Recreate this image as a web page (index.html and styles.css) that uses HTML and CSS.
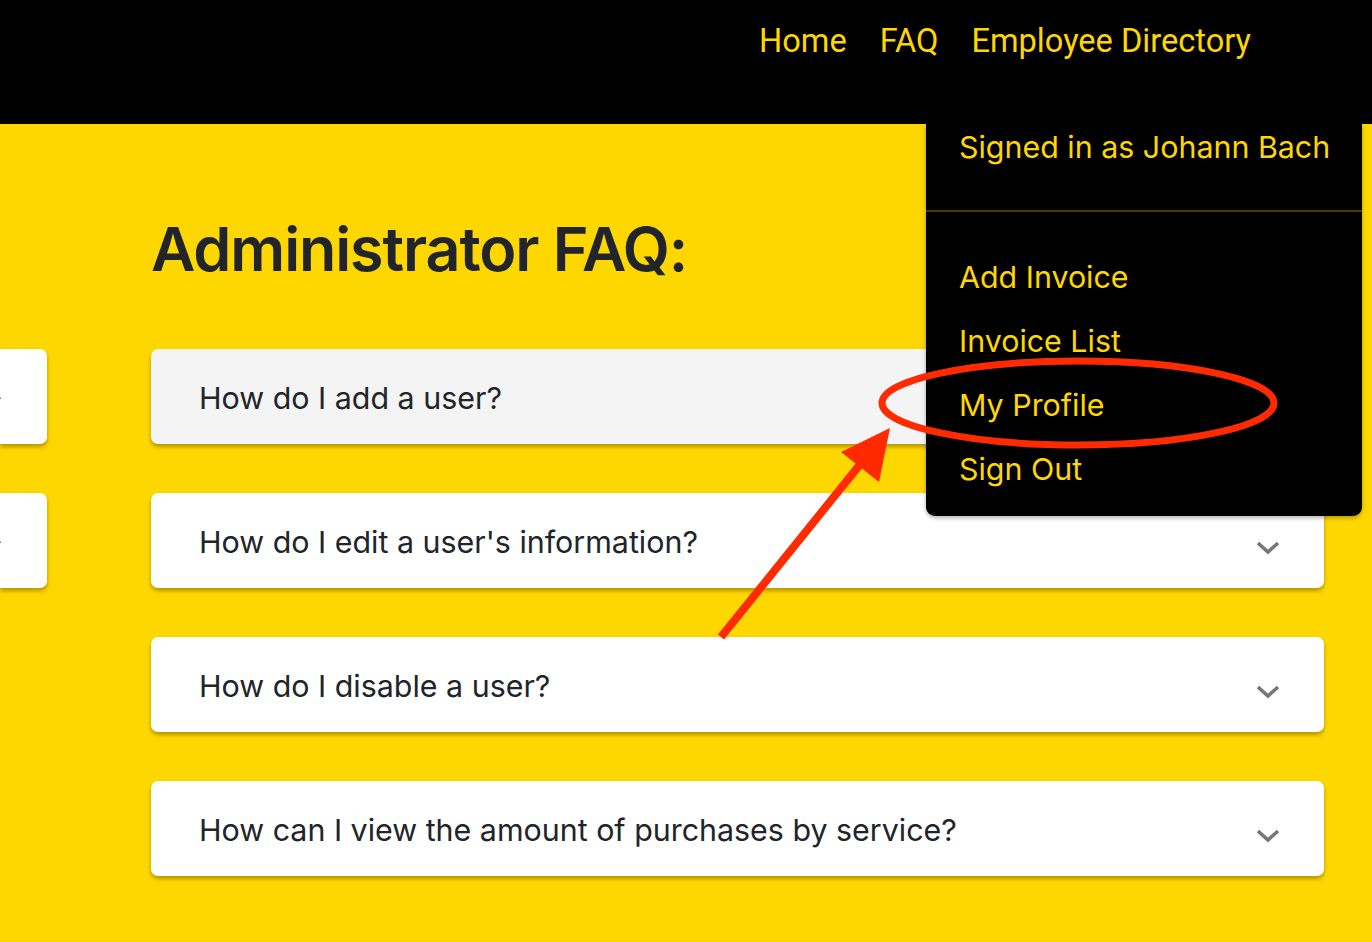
FILE: index.html
```html
<!DOCTYPE html>
<html lang="en">
<head>
<meta charset="utf-8">
<title>Administrator FAQ</title>
<link rel="stylesheet" href="styles.css">
</head>
<body>
<header class="topbar">
  <nav class="nav">
    <a class="nav-link" href="#">Home</a>
    <a class="nav-link" href="#">FAQ</a>
    <a class="nav-link" href="#">Employee Directory</a>
  </nav>
</header>

<main class="page">
  <aside class="side">
    <div class="side-card"><svg class="side-chev" viewBox="0 0 24 14" width="24" height="14"><path d="M2 2 L12 11 L22 2" fill="none" stroke="#777" stroke-width="3.6"/></svg></div>
    <div class="side-card"><svg class="side-chev" viewBox="0 0 24 14" width="24" height="14"><path d="M2 2 L12 11 L22 2" fill="none" stroke="#777" stroke-width="3.6"/></svg></div>
  </aside>
  <section class="content">
    <h1 class="title">Administrator FAQ:</h1>
    <div class="faq-list">
      <div class="faq-item faq-item--hover">
        <span class="faq-q">How do I add a user?</span>
        <svg class="chev" viewBox="0 0 24 14" width="24" height="14"><path d="M2 2 L12 11 L22 2" fill="none" stroke="#777" stroke-width="3.6"/></svg>
      </div>
      <div class="faq-item">
        <span class="faq-q">How do I edit a user's information?</span>
        <svg class="chev" viewBox="0 0 24 14" width="24" height="14"><path d="M2 2 L12 11 L22 2" fill="none" stroke="#777" stroke-width="3.6"/></svg>
      </div>
      <div class="faq-item">
        <span class="faq-q">How do I disable a user?</span>
        <svg class="chev" viewBox="0 0 24 14" width="24" height="14"><path d="M2 2 L12 11 L22 2" fill="none" stroke="#777" stroke-width="3.6"/></svg>
      </div>
      <div class="faq-item">
        <span class="faq-q">How can I view the amount of purchases by service?</span>
        <svg class="chev" viewBox="0 0 24 14" width="24" height="14"><path d="M2 2 L12 11 L22 2" fill="none" stroke="#777" stroke-width="3.6"/></svg>
      </div>
    </div>
  </section>
</main>

<div class="dropdown">
  <div class="dd-head">Signed in as Johann Bach</div>
  <div class="dd-divider"></div>
  <ul class="dd-list">
    <li><a href="#">Add Invoice</a></li>
    <li><a href="#">Invoice List</a></li>
    <li><a href="#">My Profile</a></li>
    <li><a href="#">Sign Out</a></li>
  </ul>
</div>

<svg class="annot" width="1372" height="942" viewBox="0 0 1372 942">
  <ellipse cx="1078" cy="403" rx="196" ry="42" fill="none" stroke="#ff2a00" stroke-width="7"/>
  <line x1="721" y1="637" x2="862" y2="462" stroke="#ff2a00" stroke-width="8"/>
  <polygon points="890,428 841,452 879,482" fill="#ff2a00"/>
</svg>
</body>
</html>
```

FILE: styles.css
```css
* { box-sizing: border-box; }
html, body { margin: 0; padding: 0; }
body {
  background: #ffd700;
  width: 1372px;
  height: 942px;
  overflow: hidden;
  position: relative;
  font-family: Inter, "Noto Sans", sans-serif;
  color: #212529;
}
a { text-decoration: none; color: inherit; }

.topbar {
  background: #000;
  height: 124px;
  display: flex;
  justify-content: flex-end;
  align-items: flex-start;
  padding: 19px 121px 0 0;
}
.nav { display: flex; gap: 33px; }
.nav-link {
  font-family: Roboto, "Liberation Sans", sans-serif;
  font-size: 32.6px;
  color: #ffd700;
  line-height: 44px;
}

.page {
  display: flex;
  gap: 104px;
}
.side {
  width: 47px;
  padding-top: 225px;
  display: flex;
  flex-direction: column;
  gap: 49px;
}
.side-card {
  height: 95px;
  background: #fff;
  border-radius: 0 7px 7px 0;
  box-shadow: 0 3px 4px rgba(0,0,0,0.3);
  display: flex;
  align-items: center;
  overflow: hidden;
}
.side-chev { margin-left: -22px; margin-top: 10px; flex: none; }
.content {
  width: 1173px;
  padding-top: 86px;
}
.title {
  margin: 0 0 61px 0;
  font-family: Inter, sans-serif;
  font-weight: 600;
  font-size: 61px;
  line-height: 78px;
  letter-spacing: -1.1px;
  color: #212529;
}
.faq-list { display: flex; flex-direction: column; gap: 49px; }
.faq-item {
  height: 95px;
  background: #fff;
  border-radius: 7px;
  box-shadow: 0 3px 4px rgba(0,0,0,0.3);
  display: flex;
  align-items: center;
  justify-content: space-between;
  padding: 0 44px 0 48px;
}
.faq-item--hover { background: #f4f4f4; }
.faq-q {
  font-family: Inter, "Noto Sans", sans-serif;
  font-size: 30.4px;
  color: #212529;
  margin-top: 2px;
}
.chev { margin-top: 14px; }

.dropdown {
  position: absolute;
  left: 926px;
  top: 124px;
  width: 436px;
  height: 392px;
  background: #000;
  border-radius: 0 0 9px 9px;
  box-shadow: 0 2px 4px rgba(0,0,0,0.3);
  color: #ffd700;
  font-family: Inter, "Noto Sans", sans-serif;
  font-size: 30.4px;
}
.dd-head {
  padding: 3px 0 0 33px;
  line-height: 40px;
  height: 86px;
}
.dd-divider { height: 2px; background: #4a3c00; }
.dd-list {
  list-style: none;
  margin: 0;
  padding: 44px 0 0 33px;
  display: flex;
  flex-direction: column;
}
.dd-list li { height: 64px; line-height: 42px; }

.annot {
  position: absolute;
  left: 0;
  top: 0;
  pointer-events: none;
}
```
